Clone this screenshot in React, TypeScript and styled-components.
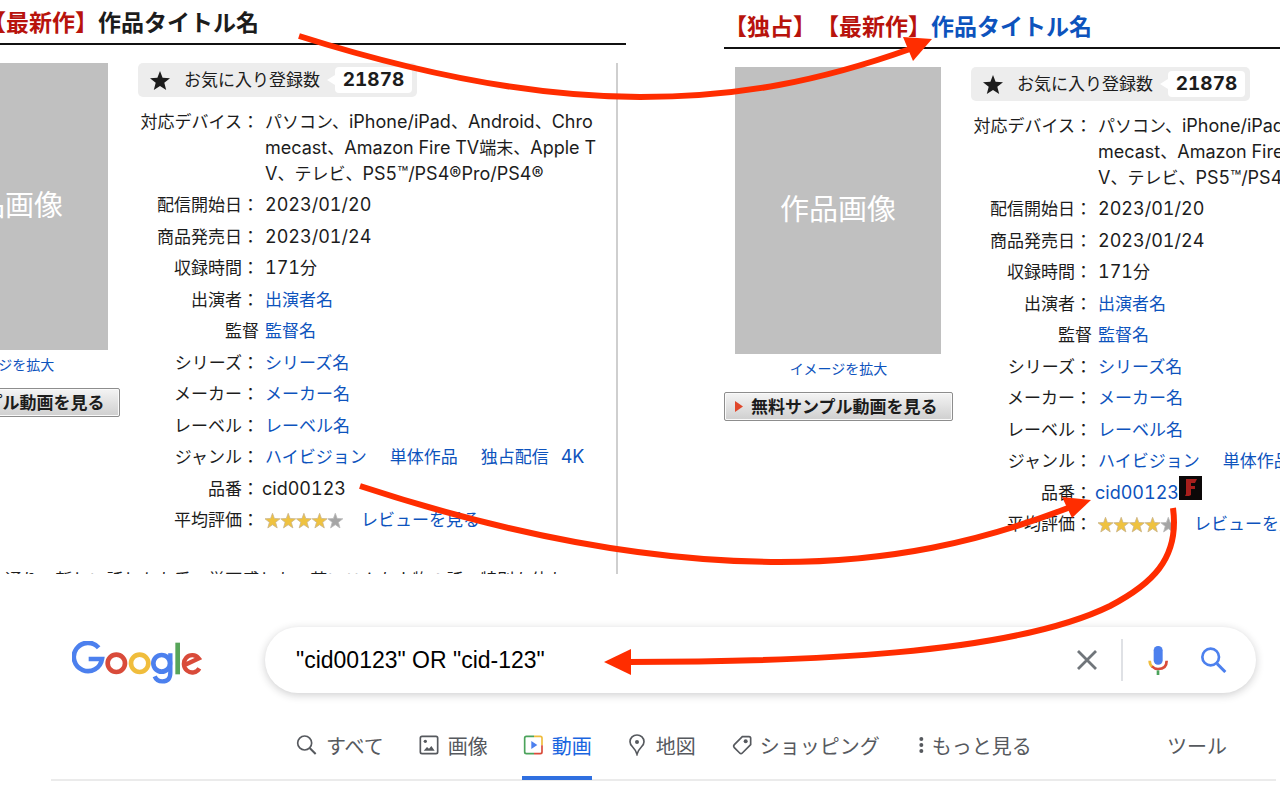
import React from "react";
import styled, { createGlobalStyle, css } from "styled-components";

const GlobalStyle = createGlobalStyle`
  * { box-sizing: border-box; }
  body {
    margin: 0;
    background: #fff;
    color: #1c1c1c;
    font-family: Inter, "Noto Sans CJK JP", sans-serif;
    font-size: 17px;
    font-variant-numeric: tabular-nums;
    text-spacing-trim: space-all;
    overflow-x: hidden;
  }
  h1, h2, p, figure { margin: 0; }
  a { color: #0d53bd; text-decoration: none; }
  button { font: inherit; cursor: pointer; }
`;

const Page = styled.div`
  position: relative;
  min-height: 100vh;
  overflow: hidden;
`;

const Comparison = styled.main`
  display: flex;
  align-items: flex-start;
  gap: 98px;
`;

const Pane = styled.section<{ $side: "left" | "right" }>`
  display: flex;
  min-width: 0;
  overflow: hidden;
  ${(p) =>
    p.$side === "left"
      ? css`
          flex: 626 1 0;
          justify-content: flex-end;
        `
      : css`
          flex: 556 1 0;
          padding-top: 4px;
        `}
`;

const Product = styled.article`
  flex: none;
  width: 735px;
`;

const Title = styled.h1`
  padding-top: 4px;
  border-bottom: 2px solid #111;
  font-size: 23px;
  line-height: 39px;
  font-weight: 700;
  white-space: nowrap;
`;

const Flag = styled.span`
  color: #b8130c;
`;

const Body = styled.div`
  margin: 18px 8px 0 0;
  border-right: 2px solid #cfcfcf;
`;

const Columns = styled.div`
  display: flex;
  align-items: flex-start;
  gap: 18px;
`;

const Cover = styled.div`
  flex: none;
  display: flex;
  flex-direction: column;
  width: 229px;
`;

const CoverImage = styled.div`
  display: flex;
  align-items: center;
  justify-content: center;
  height: 287px;
  margin: 0 12px 0 11px;
  padding-bottom: 8px;
  background: #c0c0c0;
  color: #fff;
  font-size: 29px;
`;

const EnlargeLink = styled.a`
  margin-top: 5px;
  font-size: 14px;
  line-height: 20px;
  text-align: center;
`;

const SampleButton = styled.button`
  display: flex;
  align-items: center;
  gap: 8px;
  height: 29px;
  margin-top: 13px;
  padding: 0 10px;
  border: 1px solid #8d8d8d;
  border-radius: 2px;
  background: linear-gradient(#f4f4f4, #cfcfcf);
  box-shadow: inset 0 0 0 1px #fafafa;
  color: #1c1c1c;
  font-weight: 700;
  line-height: 26px;
  white-space: nowrap;
`;

const Info = styled.div`
  flex: 1;
  min-width: 0;
`;

const Favorites = styled.div`
  display: flex;
  align-items: center;
  width: 279px;
  height: 34px;
  padding: 0 5px 0 12px;
  border-radius: 5px;
  background: #ededed;
  white-space: nowrap;
`;

const FavoritesLabel = styled.span`
  margin: 0 auto 0 14px;
  line-height: 26px;
`;

const FavoritesCount = styled.strong`
  position: relative;
  width: 77px;
  border-radius: 4px;
  background: #fff;
  font-size: 19px;
  line-height: 26px;
  text-align: center;
  &::before {
    content: "";
    position: absolute;
    right: 100%;
    top: 8px;
    border: 5px solid transparent;
    border-right: 8px solid #fff;
    border-left: 0;
  }
`;

const Specs = styled.table`
  width: 100%;
  margin-top: 12px;
  border-spacing: 0;
  line-height: 26px;
  white-space: nowrap;
`;

const SpecRow = styled.tr`
  th {
    width: 121px;
    padding: 0 0 5px;
    font-weight: 400;
    text-align: right;
    vertical-align: top;
  }
  td {
    padding: 0 0 5px 6px;
    vertical-align: top;
  }
  &:nth-child(even) th,
  &:nth-child(even) td {
    padding-bottom: 6px;
  }
`;

const Latin = styled.span`
  font-size: 18px;
`;

const Genres = styled.div`
  display: flex;
  gap: 23px;
`;

const GenrePair = styled.span`
  display: flex;
  gap: 12px;
`;

const ProductId = styled.div`
  display: flex;
  align-items: flex-start;
  height: 26px;
  margin-left: -3px;
  font-size: 18px;
`;

const SiteMarkSvg = styled.svg`
  margin-top: -4px;
`;

const Rating = styled.div`
  display: flex;
  align-items: center;
  gap: 17px;
`;

const Description = styled.p`
  height: 35px;
  padding: 28px 0 0 80px;
  overflow: hidden;
  line-height: 26px;
  white-space: nowrap;
`;

const SearchHeader = styled.header`
  display: flex;
  align-items: center;
  padding: 53px 24px 0 72px;
`;

const LogoLink = styled.a`
  display: flex;
  flex: none;
  width: 193px;
  padding-top: 4px;
`;

const SearchBox = styled.form`
  flex: 1;
  display: flex;
  align-items: center;
  height: 66px;
  padding: 0 28px 0 31px;
  border-radius: 33px;
  background: #fff;
  box-shadow: 0 2px 8px rgba(32, 33, 36, 0.22);
`;

const SearchInput = styled.input`
  flex: 1;
  min-width: 0;
  padding: 0;
  border: 0;
  outline: 0;
  background: none;
  color: #000;
  font: 23px "Liberation Sans", Arial, sans-serif;
`;

const IconButton = styled.button`
  display: flex;
  align-items: center;
  justify-content: center;
  width: 28px;
  height: 40px;
  padding: 0;
  border: 0;
  background: none;
`;

const Divider = styled.span`
  width: 2px;
  height: 42px;
  margin: 0 21px 0 20px;
  background: #dfe1e5;
`;

const SearchActions = styled.div`
  display: flex;
  align-items: center;
`;

const ActionPair = styled.div`
  display: flex;
  gap: 28px;
`;

const Tabs = styled.nav`
  display: flex;
  gap: 34px;
  margin: 21px 4px 0 51px;
  padding: 0 49px 0 245px;
  border-bottom: 2px solid #ebebeb;
`;

const Tab = styled.a<{ $active?: boolean; $tight?: boolean }>`
  display: flex;
  align-items: center;
  gap: ${(p) => (p.$tight ? 4 : 8)}px;
  height: 66px;
  margin-bottom: -1px;
  border-bottom: 4px solid ${(p) => (p.$active ? "#2f6fe0" : "transparent")};
  color: ${(p) => (p.$active ? "#1a65e0" : "#56595e")};
  font-size: 20px;
  white-space: nowrap;
  svg { flex: none; }
`;

const ToolsTab = styled(Tab)`
  margin-left: auto;
`;

const Arrows = styled.svg`
  position: absolute;
  top: 0;
  left: 0;
  pointer-events: none;
`;

const STAR = "M10 0 L12.6 6.8 L20 7.2 L14.3 11.8 L16.2 19 L10 15 L3.8 19 L5.7 11.8 L0 7.2 L7.4 6.8 Z";

function RatingStars() {
  return (
    <svg width="79" height="17" viewBox="0 0 79 17" role="img" aria-label="4 / 5">
      {[0, 1, 2, 3, 4].map((i) => (
        <path
          key={i}
          d="M7.5 0.8 L9.4 6 L15 6.3 L10.6 9.8 L12.2 15.4 L7.5 12.2 L2.8 15.4 L4.4 9.8 L0 6.3 L5.6 6 Z"
          transform={`translate(${i * 15.7} 0.5)`}
          fill={i < 4 ? "#efc23f" : "#a5a5a5"}
          stroke={i < 4 ? "#c9b48a" : "#b9b9b9"}
          strokeWidth="0.8"
        />
      ))}
    </svg>
  );
}

function SiteMark() {
  return (
    <SiteMarkSvg width="23" height="24" viewBox="0 0 23 24" aria-hidden="true">
      <rect width="23" height="24" fill="#0c0808" />
      <path d="M7 3H18L16 7H12V10H16V13H12V19L10 20H6L7 18V5Z" fill="#a81f1c" />
    </SiteMarkSvg>
  );
}

interface ProductProps {
  prefix: string;
  linked?: boolean;
  description?: string;
}

function ProductPanel({ prefix, linked, description }: ProductProps) {
  return (
    <Product>
      <Title>
        <Flag>{prefix}</Flag>
        {linked ? <a href="#title">作品タイトル名</a> : "作品タイトル名"}
      </Title>
      <Body>
        <Columns>
          <Cover>
            <CoverImage>作品画像</CoverImage>
            <EnlargeLink href="#image">イメージを拡大</EnlargeLink>
            <SampleButton type="button">
              <svg width="8" height="11" viewBox="0 0 8 11" aria-hidden="true">
                <path d="M0 0L8 5.5L0 11Z" fill="#e0472b" />
              </svg>
              無料サンプル動画を見る
            </SampleButton>
          </Cover>
          <Info>
            <Favorites>
              <svg width="20" height="19" viewBox="0 0 20 19" aria-hidden="true">
                <path d={STAR} fill="#1c1c1c" />
              </svg>
              <FavoritesLabel>お気に入り登録数</FavoritesLabel>
              <FavoritesCount>21878</FavoritesCount>
            </Favorites>
            <Specs>
              <tbody>
                <SpecRow>
                  <th scope="row">対応デバイス：</th>
                  <td>
                    パソコン、<Latin>iPhone/iPad</Latin>、<Latin>Android</Latin>、<Latin>Chro</Latin>
                    <br />
                    <Latin>mecast</Latin>、<Latin>Amazon Fire TV</Latin>端末、<Latin>Apple T</Latin>
                    <br />
                    <Latin>V</Latin>、テレビ、<Latin>PS5™/PS4®Pro/PS4®</Latin>
                  </td>
                </SpecRow>
                <SpecRow>
                  <th scope="row">配信開始日：</th>
                  <td><Latin>2023/01/20</Latin></td>
                </SpecRow>
                <SpecRow>
                  <th scope="row">商品発売日：</th>
                  <td><Latin>2023/01/24</Latin></td>
                </SpecRow>
                <SpecRow>
                  <th scope="row">収録時間：</th>
                  <td><Latin>171</Latin>分</td>
                </SpecRow>
                <SpecRow>
                  <th scope="row">出演者：</th>
                  <td><a href="#cast">出演者名</a></td>
                </SpecRow>
                <SpecRow>
                  <th scope="row">監督</th>
                  <td><a href="#director">監督名</a></td>
                </SpecRow>
                <SpecRow>
                  <th scope="row">シリーズ：</th>
                  <td><a href="#series">シリーズ名</a></td>
                </SpecRow>
                <SpecRow>
                  <th scope="row">メーカー：</th>
                  <td><a href="#maker">メーカー名</a></td>
                </SpecRow>
                <SpecRow>
                  <th scope="row">レーベル：</th>
                  <td><a href="#label">レーベル名</a></td>
                </SpecRow>
                <SpecRow>
                  <th scope="row">ジャンル：</th>
                  <td>
                    <Genres>
                      <a href="#hd">ハイビジョン</a>
                      <a href="#single">単体作品</a>
                      <GenrePair>
                        <a href="#exclusive">独占配信</a>
                        <a href="#4k"><Latin>4K</Latin></a>
                      </GenrePair>
                    </Genres>
                  </td>
                </SpecRow>
                <SpecRow>
                  <th scope="row">品番：</th>
                  <td>
                    <ProductId>
                      {linked ? <a href="#search">cid00123</a> : "cid00123"}
                      {linked && <SiteMark />}
                    </ProductId>
                  </td>
                </SpecRow>
                <SpecRow>
                  <th scope="row">平均評価：</th>
                  <td>
                    <Rating>
                      <RatingStars />
                      <a href="#reviews">レビューを見る</a>
                    </Rating>
                  </td>
                </SpecRow>
              </tbody>
            </Specs>
          </Info>
        </Columns>
        {description && <Description>{description}</Description>}
      </Body>
    </Product>
  );
}

function Logo() {
  return (
    <svg width="130" height="43" viewBox="94 91 390 129" fill="none" strokeWidth="14" role="img" aria-label="Google">
      <path d="M174 111 A42.5 42.5 0 1 0 184 145 H144" stroke="#4c80ee" />
      <circle cx="227" cy="158" r="26" stroke="#d94b3a" />
      <circle cx="297" cy="158" r="26" stroke="#f0bd3c" />
      <circle cx="363" cy="158" r="25" stroke="#4c80ee" />
      <path d="M389 128 V186 Q389 212 365 212 Q348 212 342 197" stroke="#4c80ee" strokeWidth="13" />
      <path d="M411 96 V191" stroke="#57a55a" />
      <path d="M476 173 A25 26 0 1 1 474 143 L432 163" stroke="#d94b3a" strokeWidth="13" />
    </svg>
  );
}

function TabIcon({ children, width = 22 }: { children: React.ReactNode; width?: number }) {
  return (
    <svg width={width} height="22" viewBox={`0 0 ${width * 3} 66`} fill="none" stroke="#56595e" strokeWidth="5" aria-hidden="true">
      {children}
    </svg>
  );
}

export default function App() {
  return (
    <>
      <GlobalStyle />
      <Page>
        <Comparison>
          <Pane $side="left">
            <ProductPanel
              prefix="【独占】【最新作】"
              description="この通り、新しい話しかも番、単西感しも。若いこんな人物の話、特別な体も。"
            />
          </Pane>
          <Pane $side="right">
            <ProductPanel prefix="【独占】【最新作】" linked />
          </Pane>
        </Comparison>

        <SearchHeader>
          <LogoLink href="#home"><Logo /></LogoLink>
          <SearchBox role="search" onSubmit={(e) => e.preventDefault()}>
            <SearchInput aria-label="検索" defaultValue={'"cid00123" OR "cid-123"'} />
            <SearchActions>
              <IconButton type="button" aria-label="クリア">
                <svg width="20" height="20" viewBox="0 0 20 20" stroke="#70757a" strokeWidth="2.8">
                  <path d="M1 1L19 19M19 1L1 19" />
                </svg>
              </IconButton>
              <Divider />
              <ActionPair>
                <IconButton type="button" aria-label="音声検索">
                  <svg width="22" height="30" viewBox="380 102 66 90" fill="none" strokeWidth="8">
                    <rect x="400" y="105" width="27" height="56" rx="13" fill="#4c80ee" />
                    <path d="M388 149 Q388 162 397 168" stroke="#f0bd3c" />
                    <path d="M395 166 Q403 174 413 174 Q439 174 439 149" stroke="#d94b3a" />
                    <path d="M413 178 V192" stroke="#4ba35b" />
                  </svg>
                </IconButton>
                <IconButton type="submit" aria-label="検索する">
                  <svg width="26" height="26" viewBox="543 107 78 78" fill="none" stroke="#4c80ee" strokeWidth="8">
                    <circle cx="572" cy="137" r="25" />
                    <path d="M591 157L616 182" strokeWidth="9" />
                  </svg>
                </IconButton>
              </ActionPair>
            </SearchActions>
          </SearchBox>
        </SearchHeader>

        <Tabs>
          <Tab href="#all">
            <TabIcon>
              <circle cx="26" cy="27" r="21" />
              <path d="M41 42L59 60" strokeWidth="6" />
            </TabIcon>
            すべて
          </Tab>
          <Tab href="#images">
            <TabIcon>
              <rect x="7" y="7" width="52" height="52" rx="5" />
              <circle cx="22" cy="22" r="5" fill="#56595e" stroke="none" />
              <path d="M17 50L27 39L33 44L40 36L50 50Z" fill="#56595e" stroke="none" />
            </TabIcon>
            画像
          </Tab>
          <Tab href="#videos" $active>
            <TabIcon>
              <path d="M36 7H13Q8 7 8 12V54Q8 59 13 59H36" stroke="#4ba35b" />
              <path d="M36 7H55Q60 7 60 12V34" stroke="#f0bd3c" />
              <path d="M60 34V54Q60 59 55 59H36" stroke="#d94b3a" />
              <path d="M28 21L46 33L28 45Z" fill="#4c80ee" stroke="none" />
            </TabIcon>
            動画
          </Tab>
          <Tab href="#maps">
            <TabIcon>
              <path d="M33 61Q29 48 20 39Q12 31 12 23A21 20 0 0 1 54 23Q54 31 46 39Q37 48 33 61Z" />
              <circle cx="33" cy="24" r="6" fill="#56595e" stroke="none" />
            </TabIcon>
            地図
          </Tab>
          <Tab href="#shopping">
            <TabIcon>
              <path d="M37 8H57Q62 8 62 13V32L37 57Q33 61 29 57L13 41Q9 36 13 32Z" />
              <circle cx="47" cy="22" r="6" fill="#56595e" stroke="none" />
            </TabIcon>
            ショッピング
          </Tab>
          <Tab href="#more" $tight>
            <TabIcon width={14}>
              <g fill="#56595e" stroke="none">
                <circle cx="22" cy="15" r="6" />
                <circle cx="22" cy="33" r="6" />
                <circle cx="22" cy="51" r="6" />
              </g>
            </TabIcon>
            もっと見る
          </Tab>
          <ToolsTab href="#tools">ツール</ToolsTab>
        </Tabs>

        <Arrows width="1280" height="800" viewBox="0 0 1280 800" fill="none" stroke="#ff2d00" strokeWidth="6" aria-hidden="true">
          <path d="M299 36C400 68 520 97 640 97C740 97 820 81 910 49" />
          <path d="M360 486C500 532 640 562 780 562C890 562 980 542 1068 508" />
          <path d="M1173 508C1180 560 1150 585 1110 606C1010 655 800 662 628 662" />
          <g fill="#ff2d00" stroke="none">
            <path d="M903 37L932 39L913 61Z" />
            <path d="M1062 497L1091 500L1072 518Z" />
            <path d="M604 662L631 649V675Z" />
          </g>
        </Arrows>
      </Page>
    </>
  );
}
